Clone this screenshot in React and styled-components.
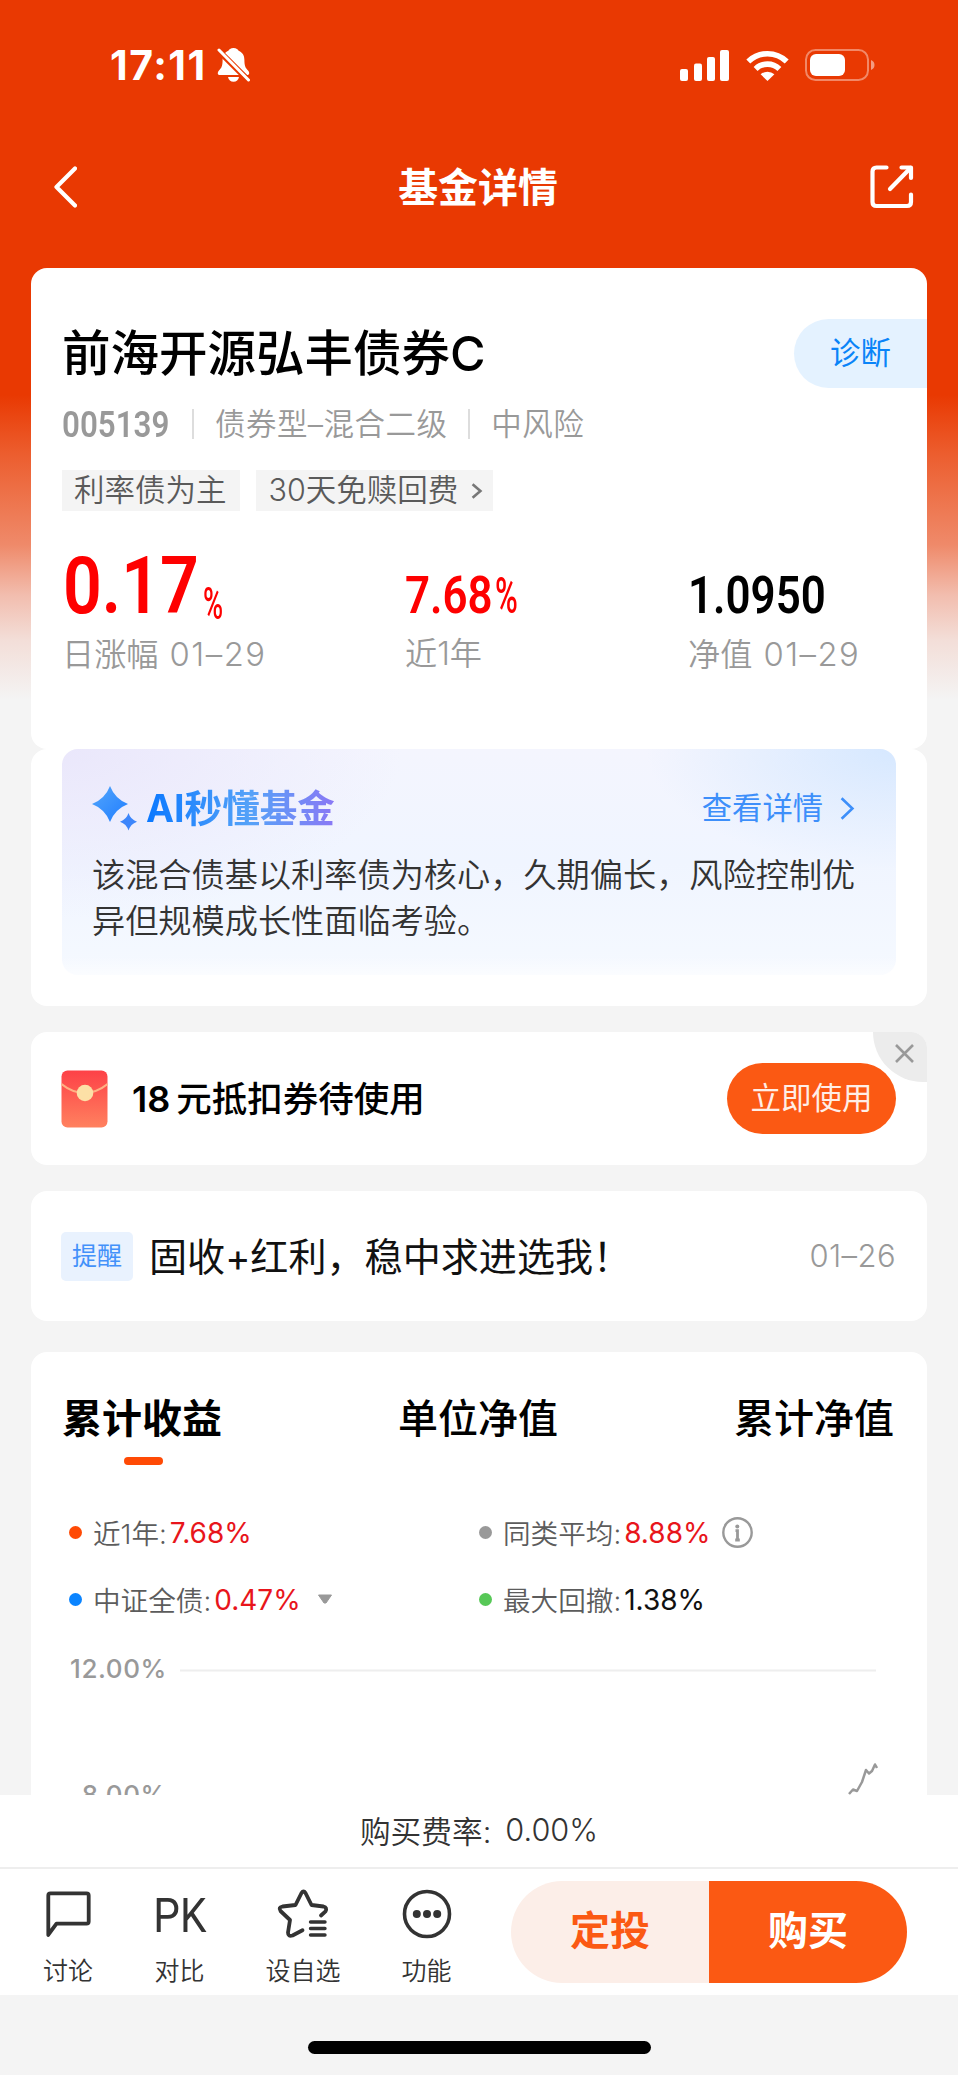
import React from 'react';
import styled, { createGlobalStyle } from 'styled-components';

const GlobalStyle = createGlobalStyle`
  * {
    box-sizing: border-box;
  }

  body {
    margin: 0;
    background: #f4f4f4;
    font-family: Inter, "Noto Sans CJK SC", sans-serif;
    color: #000;
  }

  svg {
    display: block;
    flex: none;
  }
`;

const stats = [
  { value: '0.17', label: '日涨幅', date: '01–29', color: '#fe0000', big: true, percent: true },
  { value: '7.68', label: '近1年', color: '#fe0000', percent: true },
  { value: '1.0950', label: '净值', date: '01–29', color: '#000' },
];

const legends = [
  { dot: '#ff4a05', label: '近1年:', value: '7.68%', color: '#e8151b' },
  { dot: '#999', label: '同类平均:', value: '8.88%', color: '#e8151b', info: true },
  { dot: '#0a84ff', label: '中证全债:', value: '0.47%', color: '#e8151b', arrow: true },
  { dot: '#57c857', label: '最大回撤:', value: '1.38%', color: '#111' },
];

const tabs = ['累计收益', '单位净值', '累计净值'];

const BellOffIcon = () => (
  <svg width="33" height="36" viewBox="0 0 33 36">
    <path
      d="M16.5 1C13.5 1 12 2.6 11.4 3.8C7 5.6 5.6 9 5.6 13C5.6 19 4.5 21 2 23.4C0 25.6 .6 28 3 28H30C32.4 28 33 25.6 31 23.4C28.5 21 27.4 19 27.4 13C27.4 9 26 5.6 21.6 3.8C21 2.6 19.5 1 16.5 1Z"
      fill="#fff"
    />
    <path d="M11 30H22C21.4 33 19.4 34.8 16.5 34.8S11.600 33 11 30Z" fill="#fff" />
    <path d="M1 3L33 35" stroke="#e93902" strokeWidth="6" />
    <path d="M2 3L31.500 33" stroke="#fff" strokeWidth="3" strokeLinecap="round" />
  </svg>
);

const SignalIcon = () => (
  <svg width="49" height="31" viewBox="0 0 49 31" fill="#fff">
    <rect x="0" y="19" width="8" height="12" rx="2" />
    <rect x="14" y="13.500" width="8" height="17.500" rx="2" />
    <rect x="27" y="7" width="8" height="24" rx="2" />
    <rect x="40" y="0" width="9" height="31" rx="2" />
  </svg>
);

const WifiIcon = () => (
  <svg width="43" height="31" viewBox="0 0 43 31" fill="none" stroke="#fff" strokeWidth="5.600">
    <path d="M2.300 11.500A27.500 27.500 0 0 1 40.700 11.500" />
    <path d="M9.600 18.900A17.200 17.200 0 0 1 33.400 18.900" />
    <path d="M21.500 31L14.600 24.300A10.500 10.500 0 0 1 28.400 24.300Z" fill="#fff" stroke="none" />
  </svg>
);

const BatteryIcon = () => (
  <svg width="70" height="32" viewBox="0 0 70 32">
    <rect x="1" y="1" width="62" height="30" rx="9.500" fill="none" stroke="#fff" strokeOpacity=".4" strokeWidth="2" />
    <rect x="5" y="5" width="35" height="22" rx="6" fill="#fff" />
    <path d="M66 11C68.500 12 69.500 13.800 69.500 16S68.500 20 66 21Z" fill="#fff" fillOpacity=".5" />
  </svg>
);

const BackIcon = () => (
  <svg width="24" height="44" viewBox="0 0 24 44" fill="none" stroke="#fff" strokeWidth="4.200" strokeLinecap="round" strokeLinejoin="round">
    <path d="M22 3.500L3.500 22L22 40.500" />
  </svg>
);

const ShareIcon = () => (
  <svg width="44" height="44" viewBox="0 0 44 44" fill="none" stroke="#fff" strokeWidth="4.200" strokeLinecap="round" strokeLinejoin="round">
    <path d="M16.500 2.500H6.500Q2.500 2.500 2.500 6.500V37Q2.500 41 6.500 41H37Q41 41 41 37V29.500" />
    <path d="M31.500 2.500H41V13" />
    <path d="M40.500 3L20 24" />
  </svg>
);

const Chevron = ({ width, height, color, stroke }) => (
  <svg width={width} height={height} viewBox={`0 0 ${width} ${height}`} fill="none" stroke={color} strokeWidth={stroke}>
    <path d={`M${stroke} ${stroke / 2}L${width - stroke} ${height / 2}L${stroke} ${height - stroke / 2}`} />
  </svg>
);

const SparkIcon = () => (
  <svg width="46" height="46" viewBox="0 0 46 46">
    <defs>
      <linearGradient id="spark" x1="0" y1="0" x2="1" y2="1">
        <stop offset="0" stopColor="#54a6fb" />
        <stop offset="1" stopColor="#1f7dff" />
      </linearGradient>
    </defs>
    <path d="M18 0Q23 13 36 18Q23 23 18 36Q13 23 0 18Q13 13 18 0Z" fill="url(#spark)" />
    <path d="M36.500 27Q38.500 33.500 45 35.700Q38.500 38 36.500 44.500Q34.500 38 28 35.700Q34.500 33.500 36.500 27Z" fill="#3d86fb" />
  </svg>
);

const RedPacketIcon = () => (
  <svg width="47" height="58" viewBox="0 0 47 58">
    <defs>
      <linearGradient id="packet" x1="0" y1="0" x2="0" y2="1">
        <stop offset="0" stopColor="#fd4147" />
        <stop offset="1" stopColor="#ff815f" />
      </linearGradient>
    </defs>
    <rect x=".5" y=".5" width="46" height="57" rx="6" fill="url(#packet)" />
    <path d="M.5 14Q11 22.500 23.500 23Q36 22.500 46.500 14" fill="none" stroke="#ffb184" strokeWidth="2" />
    <circle cx="24" cy="23" r="8.300" fill="#fce0a6" />
  </svg>
);

const CloseIcon = () => (
  <svg width="19" height="19" viewBox="0 0 19 19" stroke="#999" strokeWidth="2.600">
    <path d="M1 1L18 18M18 1L1 18" />
  </svg>
);

const InfoIcon = () => (
  <svg width="31" height="31" viewBox="0 0 31 31">
    <circle cx="15.500" cy="15.500" r="14.200" fill="none" stroke="#999" strokeWidth="2.400" />
    <circle cx="15.300" cy="9.500" r="2" fill="#999" />
    <path d="M13.500 13.700H15.500V23M13.200 23H17.800" fill="none" stroke="#999" strokeWidth="2.800" />
  </svg>
);

const ArrowDownIcon = () => (
  <svg width="16" height="11" viewBox="0 0 16 11">
    <path d="M1.500 1H14.500L9 9H7Z" fill="#999" stroke="#999" strokeLinejoin="round" />
  </svg>
);

const ChatIcon = () => (
  <svg width="48" height="50" viewBox="0 0 48 50" fill="none" stroke="#333" strokeWidth="3.800" strokeLinejoin="round">
    <path d="M4.300 46V6.500Q4.300 4.300 6.500 4.300H42.500Q44.700 4.300 44.700 6.500V32.500Q44.700 34.700 42.500 34.700H12.500L4.800 45Z" />
  </svg>
);

const StarListIcon = () => (
  <svg width="52" height="50" viewBox="0 0 52 50" fill="none" stroke="#333" strokeWidth="3.800" strokeLinecap="round" strokeLinejoin="round">
    <path d="M44 26.500L48.500 22.300Q50.500 18.500 46.500 17.500L34.500 16L28.500 4Q26.500 1 24.500 4L18.500 16L5.500 17.500Q1 18.500 3.500 22L13 31L11 43.500Q11 48 15.500 46.500L25.500 41.200" />
    <path d="M33.500 33H48M33.500 39.500H48M33.500 46H48" strokeWidth="3.400" />
  </svg>
);

const MoreIcon = () => (
  <svg width="50" height="50" viewBox="0 0 50 50">
    <circle cx="25" cy="25" r="22.500" fill="none" stroke="#333" strokeWidth="3.600" />
    <circle cx="14.800" cy="25" r="4" fill="#333" />
    <circle cx="25" cy="25" r="4" fill="#333" />
    <circle cx="35.200" cy="25" r="4" fill="#333" />
  </svg>
);

const App = () => {
  return (
    <Page>
      <GlobalStyle />
      <StatusBar>
        <Clock>17:11</Clock>
        <BellOffIcon />
        <StatusIcons>
          <SignalIcon />
          <WifiIcon />
          <BatteryIcon />
        </StatusIcons>
      </StatusBar>
      <NavBar>
        <BackIcon />
        <NavTitle>基金详情</NavTitle>
        <ShareIcon />
      </NavBar>

      <Content>
        <FundCard>
          <FundHead>
            <FundName>前海开源弘丰债券C</FundName>
            <Diagnose>诊断</Diagnose>
          </FundHead>
          <FundMeta>
            <FundCode>
              <Digits $size={36} $scale={0.87} $weight={600}>005139</Digits>
            </FundCode>
            <Divider />
            <span>债券型–混合二级</span>
            <Divider />
            <span>中风险</span>
          </FundMeta>
          <Tags>
            <Tag>利率债为主</Tag>
            <Tag>
              30天免赎回费
              <Chevron width={13} height={16} color="#777" stroke={2.6} />
            </Tag>
          </Tags>
          <Stats>
            {stats.map((s) => (
              <div key={s.label}>
                <StatValue $color={s.color} $big={s.big}>
                  <Digits $size={s.big ? 80 : 51} $scale={s.big ? 0.85 : 0.86} $weight={600}>{s.value}</Digits>
                  {s.percent && <Percent $big={s.big}>%</Percent>}
                </StatValue>
                <StatLabel>
                  {s.label}
                  {s.date && <StatDate>{s.date}</StatDate>}
                </StatLabel>
              </div>
            ))}
          </Stats>
        </FundCard>

        <AiCard>
          <AiPanel>
            <AiHead>
              <SparkIcon />
              <AiTitle>AI秒懂基金</AiTitle>
              <AiMore>
                查看详情
                <Chevron width={16} height={23} color="#3d8ffa" stroke={2.6} />
              </AiMore>
            </AiHead>
            <AiText>该混合债基以利率债为核心，久期偏长，风险控制优异但规模成长性面临考验。</AiText>
          </AiPanel>
        </AiCard>

        <CouponCard>
          <RedPacketIcon />
          <CouponText><b>18</b>元抵扣券待使用</CouponText>
          <UseButton>立即使用</UseButton>
          <CloseCorner>
            <CloseIcon />
          </CloseCorner>
        </CouponCard>

        <NoticeCard>
          <NoticeBadge>提醒</NoticeBadge>
          <NoticeText>固收+红利，稳中求进选我！</NoticeText>
          <NoticeDate>01–26</NoticeDate>
        </NoticeCard>

        <ChartCard>
          <Tabs>
            {tabs.map((tab, i) => (
              <Tab key={tab} $active={i === 0}>{tab}</Tab>
            ))}
          </Tabs>
          <Legends>
            {legends.map((l) => (
              <Legend key={l.label}>
                <Dot $color={l.dot} />
                <LegendLabel>{l.label}</LegendLabel>
                <LegendValue $color={l.color}>{l.value}</LegendValue>
                {l.info && <InfoIcon />}
                {l.arrow && <ArrowDownIcon />}
              </Legend>
            ))}
          </Legends>
          <Chart>
            <AxisLabels>
              <span>12.00%</span>
              <span>8.00%</span>
            </AxisLabels>
            <svg width="700" height="150" viewBox="0 0 700 150" fill="none">
              <path d="M2 17.500H698" stroke="#eee" strokeWidth="2" />
              <path
                d="M671 141L675 136.500L679 138L684 129L688 117L691 120.500L694 118L697 111.500L699 115"
                stroke="#999"
                strokeWidth="2.500"
                strokeLinejoin="round"
              />
            </svg>
          </Chart>
        </ChartCard>
      </Content>

      <FeeBar>购买费率:<span>0.00%</span></FeeBar>
      <Toolbar>
        <Tool $width={98}>
          <ChatIcon />
          讨论
        </Tool>
        <Tool $width={125}>
          <PkIcon>PK</PkIcon>
          对比
        </Tool>
        <Tool $width={122}>
          <StarListIcon />
          设自选
        </Tool>
        <Tool $width={125}>
          <MoreIcon />
          功能
        </Tool>
        <Actions>
          <ActionButton>定投</ActionButton>
          <ActionButton $primary>购买</ActionButton>
        </Actions>
      </Toolbar>
      <HomeArea>
        <HomeIndicator />
      </HomeArea>
    </Page>
  );
};

const Page = styled.div`
  display: flex;
  flex-direction: column;
  width: 958px;
  height: 2075px;
  overflow: hidden;
  background: linear-gradient(
    #e93902 395px,
    #ec5e2f 455px,
    #ef8a6a 545px,
    #f2bdae 595px,
    #f3ded8 640px,
    #f4f4f4 700px
  );
`;

const StatusBar = styled.div`
  display: flex;
  align-items: center;
  height: 130px;
  padding: 0 83px 0 110px;
`;

const Clock = styled.div`
  width: 107px;
  font-size: 41px;
  font-weight: 700;
  letter-spacing: 1.500px;
  line-height: 48px;
  color: #fff;
`;

const StatusIcons = styled.div`
  display: flex;
  align-items: center;
  gap: 16.500px;
  margin-left: auto;
`;

const NavBar = styled.div`
  display: flex;
  align-items: center;
  justify-content: space-between;
  height: 114px;
  margin-bottom: 24px;
  padding: 0 44px 0 53px;
`;

const NavTitle = styled.h1`
  margin: 2px 0 0 9px;
  font-size: 39.900px;
  font-weight: 700;
  line-height: 56px;
  color: #fff;
`;

const Content = styled.main`
  display: flex;
  flex-direction: column;
  height: 1527px;
  padding: 0 31px;
  overflow: hidden;
`;

const Card = styled.section`
  flex: none;
  background: #fff;
  border-radius: 16px;
`;

const FundCard = styled(Card)`
  height: 481px;
  padding: 51px 0 0 31px;
`;

const FundHead = styled.div`
  display: flex;
  align-items: center;
  justify-content: space-between;
  height: 69px;
`;

const FundName = styled.h2`
  margin: 0;
  font-size: 48.500px;
  font-weight: 500;
  line-height: 68px;
`;

const Diagnose = styled.div`
  width: 133px;
  padding-left: 36px;
  border-radius: 35px 0 0 35px;
  background: #e4f2ff;
  font-size: 30.400px;
  line-height: 69px;
  color: #0a84f8;
`;

const FundMeta = styled.div`
  display: flex;
  align-items: center;
  height: 30px;
  margin-top: 21px;
  font-size: 30.500px;
  font-weight: 350;
  line-height: 30px;
  color: #999;

  span {
    margin-top: -1px;
    letter-spacing: 0.450px;
  }
`;

const FundCode = styled.div`
  width: 109px;

  span {
    margin-top: 2px;
    letter-spacing: 0;
  }
`;

/* narrow numerals */
const Digits = styled.span`
  display: inline-block;
  font-family: Roboto, sans-serif;
  font-size: ${(p) => p.$size}px;
  font-weight: ${(p) => p.$weight};
  line-height: 1;
  transform: scaleX(${(p) => p.$scale});
  transform-origin: left;
`;

const Divider = styled.i`
  width: 2px;
  height: 30px;
  margin: 0 21px;
  background: #ddd;
`;

const Tags = styled.div`
  display: flex;
  gap: 16px;
  margin-top: 31px;
`;

const Tag = styled.div`
  display: flex;
  align-items: center;
  gap: 12px;
  height: 41px;
  padding: 0 13px 0 12px;
  background: #f4f4f4;
  font-size: 30.500px;
  font-weight: 350;
  line-height: 37px;
  color: #5a5a5a;

  &:first-child {
    padding-bottom: 2px;
  }

  &:last-child {
    padding: 0 10px 2px 13px;
  }

  svg {
    margin-top: 2px;
  }
`;

const Stats = styled.div`
  display: grid;
  grid-template-columns: 343px 283px 1fr;
  margin-top: 35px;
`;

const StatValue = styled.div`
  display: flex;
  align-items: flex-end;
  height: 80px;
  padding: ${(p) => (p.$big ? '0 0 0 1px' : '0 0 5px')};
  color: ${(p) => p.$color};
`;

const Percent = styled.span`
  width: 24px;
  margin-left: ${(p) => (p.$big ? '-20px' : '-12px')};
  font-family: Roboto, sans-serif;
  font-size: ${(p) => (p.$big ? 44 : 50)}px;
  font-weight: 500;
  line-height: 1;
  transform: scaleX(0.62);
  transform-origin: left;
`;

const StatLabel = styled.div`
  margin-top: 4px;
  font-size: 32.200px;
  font-weight: 350;
  line-height: 48px;
  color: #999;
`;

const StatDate = styled.span`
  margin-left: 11px;
  font-size: 32.800px;
  letter-spacing: 1.500px;
`;

const AiCard = styled(Card)`
  height: 257px;
  padding: 0 31px;
`;

const AiPanel = styled.div`
  height: 226px;
  padding: 36px 31px 0 30px;
  border-radius: 16px;
  background:
    linear-gradient(rgba(255, 255, 255, 0) 92%, rgba(255, 255, 255, 0.6)),
    radial-gradient(ellipse 250px 120px at 100% 0, #d6e8ff, rgba(214, 232, 255, 0)),
    radial-gradient(ellipse 340px 170px at 0 0, #eae7fb, rgba(236, 234, 252, 0)),
    linear-gradient(#f4f5fe, #f0f5ff 50%, #f5f9ff);
`;

const AiHead = styled.div`
  display: flex;
  align-items: center;
  height: 48px;
`;

const AiTitle = styled.h3`
  margin: 0 0 0 8px;
  background: linear-gradient(90deg, #0a78ff, #55a2f8 55%, #8a78f5);
  background-clip: text;
  color: transparent;
  font-size: 37.600px;
  font-weight: 700;
  line-height: 48px;
`;

const AiMore = styled.div`
  display: flex;
  align-items: center;
  gap: 16px;
  margin: -2px 10px 0 auto;
  font-size: 30.300px;
  line-height: 40px;
  color: #3d8ffa;

  svg {
    margin-top: 1px;
  }
`;

const AiText = styled.p`
  margin: 19px -10px 0 0;
  font-size: 33.200px;
  font-weight: 350;
  line-height: 46px;
  color: #333;
`;

const CouponCard = styled(Card)`
  position: relative;
  display: flex;
  align-items: center;
  height: 133px;
  margin-top: 26px;
  padding: 0 31px 0 30px;
  overflow: hidden;
`;

const CouponText = styled.div`
  margin: -5px 0 0 24px;
  font-size: 35.500px;
  font-weight: 500;

  b {
    margin-right: 6px;
    font-size: 36px;
    font-weight: 600;
  }
`;

const UseButton = styled.button`
  width: 169px;
  height: 71px;
  margin-left: auto;
  padding: 0 0 5px;
  border: 0;
  border-radius: 36px;
  background: #fb5913;
  font-family: inherit;
  font-size: 30.500px;
  color: #ffeee6;
`;

const CloseCorner = styled.div`
  position: absolute;
  top: 0;
  right: 0;
  display: flex;
  width: 54px;
  height: 50px;
  padding: 12px 0 0 22px;
  border-radius: 0 0 0 50px;
  background: #ececec;
`;

const NoticeCard = styled(Card)`
  display: flex;
  align-items: center;
  height: 130px;
  margin-top: 26px;
  padding: 0 31px 0 30px;
`;

const NoticeBadge = styled.div`
  width: 72px;
  height: 49px;
  border-radius: 5px;
  background: #e9f2fe;
  font-size: 25px;
  line-height: 48px;
  text-align: center;
  color: #4391fa;
`;

const NoticeText = styled.div`
  margin: -4px 0 0 16px;
  font-size: 38.100px;
  color: #111;
`;

const NoticeDate = styled.div`
  margin: -2px 0 0 auto;
  font-size: 31px;
  font-weight: 350;
  letter-spacing: 0.400px;
  color: #999;
`;

const ChartCard = styled(Card)`
  height: 460px;
  margin-top: 31px;
`;

const Tabs = styled.div`
  display: flex;
  justify-content: space-between;
  padding: 39px 33px 0 31px;
`;

const Tab = styled.div`
  display: flex;
  flex-direction: column;
  align-items: center;
  font-size: 40px;
  font-weight: ${(p) => (p.$active ? 700 : 500)};
  line-height: 56px;

  &::after {
    content: '';
    width: 39px;
    height: 8px;
    margin: 10px 0 0 2px;
    border-radius: 4px;
    background: ${(p) => (p.$active ? '#ff4a05' : 'transparent')};
  }
`;

const Legends = styled.div`
  display: grid;
  grid-template-columns: 410px 1fr;
  grid-auto-rows: 67px;
  margin-top: 34px;
  padding-left: 38px;
`;

const Legend = styled.div`
  display: flex;
  align-items: center;
  font-size: 27.600px;

  svg {
    margin-left: 12px;
  }

  svg:last-child[width='16'] {
    margin-left: 16px;
  }
`;

const Dot = styled.i`
  width: 13px;
  height: 13px;
  margin-right: 11px;
  border-radius: 50%;
  background: ${(p) => p.$color};
`;

const LegendLabel = styled.span`
  margin-top: -2px;
  font-weight: 350;
  color: #5c5c5c;
`;

const LegendValue = styled.span`
  margin-left: 3px;
  font-size: 28px;
  font-weight: 400;
  color: ${(p) => p.$color};
`;

const Chart = styled.div`
  display: flex;
  margin-top: 20px;
`;

const AxisLabels = styled.div`
  display: flex;
  flex-direction: column;
  gap: 94px;
  width: 147px;
  padding-right: 11px;
  text-align: right;
  font-size: 26px;
  font-weight: 500;
  letter-spacing: 0.600px;
  line-height: 32px;
  color: #999;
`;

const FeeBar = styled.div`
  display: flex;
  flex: none;
  align-items: center;
  justify-content: center;
  gap: 14px;
  height: 72px;
  padding-bottom: 3px;
  background: #fff;
  font-size: 30.700px;
  font-weight: 350;
  color: #333;
`;

const Toolbar = styled.div`
  display: flex;
  flex: none;
  align-items: flex-start;
  height: 128px;
  padding: 12px 51px 0 19px;
  border-top: 2px solid #eee;
  background: #fff;
`;

const Tool = styled.div`
  display: flex;
  flex-direction: column;
  align-items: center;
  width: ${(p) => p.$width}px;
  padding-top: 8px;
  gap: 14px;
  font-size: 25px;
  font-weight: 350;
  line-height: 36px;
  color: #333;
`;

const PkIcon = styled.div`
  height: 50px;
  font-family: Roboto, sans-serif;
  font-size: 49px;
  font-weight: 400;
  line-height: 54px;
  transform: scaleX(0.86);
`;

const Actions = styled.div`
  display: flex;
  flex: none;
  margin-left: auto;
  border-radius: 51px;
  overflow: hidden;
`;

const ActionButton = styled.button`
  width: 198px;
  height: 102px;
  padding: 0 0 8px;
  border: 0;
  background: ${(p) => (p.$primary ? '#fb5913' : '#fceee8')};
  color: ${(p) => (p.$primary ? '#fff' : '#fb5913')};
  font-family: inherit;
  font-size: 40px;
  font-weight: 700;
`;

const HomeArea = styled.div`
  display: flex;
  flex: none;
  justify-content: center;
  height: 80px;
  padding-top: 46px;
  background: #f4f4f4;
`;

const HomeIndicator = styled.div`
  width: 343px;
  height: 13px;
  border-radius: 7px;
  background: #000;
`;

export default App;
